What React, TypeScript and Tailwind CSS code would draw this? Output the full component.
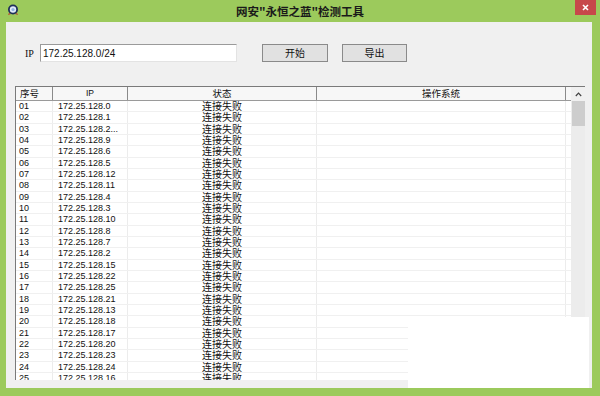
import React from 'react';

const rows: [string, string][] = [
  ['01', '172.25.128.0'],
  ['02', '172.25.128.1'],
  ['03', '172.25.128.2...'],
  ['04', '172.25.128.9'],
  ['05', '172.25.128.6'],
  ['06', '172.25.128.5'],
  ['07', '172.25.128.12'],
  ['08', '172.25.128.11'],
  ['09', '172.25.128.4'],
  ['10', '172.25.128.3'],
  ['11', '172.25.128.10'],
  ['12', '172.25.128.8'],
  ['13', '172.25.128.7'],
  ['14', '172.25.128.2'],
  ['15', '172.25.128.15'],
  ['16', '172.25.128.22'],
  ['17', '172.25.128.25'],
  ['18', '172.25.128.21'],
  ['19', '172.25.128.13'],
  ['20', '172.25.128.18'],
  ['21', '172.25.128.17'],
  ['22', '172.25.128.20'],
  ['23', '172.25.128.23'],
  ['24', '172.25.128.24'],
  ['25', '172.25.128.16'],
];

function AppIcon() {
  return (
    <svg width="12" height="12" viewBox="0 0 12 12">
      <path d="M2 9 L1 11 L4 10 Z" fill="#c0392b" />
      <path d="M10 9 L11 11 L8 10 Z" fill="#c0392b" />
      <circle cx="6" cy="5.5" r="5" fill="#1f2f5a" />
      <circle cx="6" cy="5.5" r="3.2" fill="#dfe9f7" />
      <circle cx="6" cy="5.5" r="1.6" fill="#8fb3e0" />
    </svg>
  );
}

export default function App() {
  return (
    <div className="relative w-[600px] h-[396px] bg-[#9cca5c] flex flex-col overflow-hidden font-['Liberation_Sans','Noto_Sans_CJK_SC',sans-serif] text-[#111]">
      {/* Title bar */}
      <div className="h-[22px] flex items-start">
        <div className="w-[40px] pl-[7px] pt-[4px]">
          <AppIcon />
        </div>
        <div className="flex-1 text-center pt-[4px] text-[11.5px] leading-[14px] font-bold text-[#1a1a1a] font-['Noto_Sans_CJK_SC',sans-serif]">
          网安"永恒之蓝"检测工具
        </div>
        <div className="w-[40px] flex justify-end pr-[4px]">
          <div className="w-[21px] h-[15px] bg-[#c7484a] flex items-center justify-center">
            <svg width="7" height="7" viewBox="0 0 7 7">
              <path d="M1 1 L6 6 M6 1 L1 6" stroke="#fff" strokeWidth="1.6" />
            </svg>
          </div>
        </div>
      </div>

      {/* Client area */}
      <div className="ml-[6px] mr-[8px] h-[366px] bg-[#f0f0f0] flex flex-col">
        {/* IP row */}
        <div className="mt-[22px] h-[18px] flex items-center">
          <div className="w-[34px] pl-[19px] text-[10px] font-['Liberation_Serif',serif]">IP</div>
          <div className="w-[197px] h-[18px] bg-white border border-[#9a9a9a] border-b-[#e3e3e3] border-r-[#e3e3e3] flex items-center pl-[2px] text-[10px]">
            172.25.128.0/24
          </div>
          <button className="ml-[25px] w-[66px] h-[18px] bg-[#e1e1e1] border border-[#8a8a8a] text-[10px] font-['Noto_Sans_CJK_SC',sans-serif] leading-none">
            开始
          </button>
          <button className="ml-[14px] w-[65px] h-[18px] bg-[#e1e1e1] border border-[#8a8a8a] text-[10px] font-['Noto_Sans_CJK_SC',sans-serif] leading-none">
            导出
          </button>
        </div>

        {/* List */}
        <div className="mt-[24px] ml-[9px] w-[570px] h-[294px] flex border-t border-l border-[#7a7a7a] bg-white">
          <div className="flex-1 flex flex-col overflow-hidden">
            <div className="h-[14px] shrink-0 flex items-center bg-[#f7f7f7] border-b border-[#9a9a9a] text-[9.5px] leading-[12px] font-['Noto_Sans_CJK_SC',sans-serif]">
              <div className="w-[37px] h-full pl-[4px] border-r border-[#8a8a8a]">序号</div>
              <div className="w-[75px] h-full text-center border-r border-[#8a8a8a] font-['Liberation_Sans',sans-serif] text-[8.5px]">IP</div>
              <div className="w-[189px] h-full text-center border-r border-[#8a8a8a]">状态</div>
              <div className="w-[249px] h-full text-center border-r border-[#8a8a8a]">操作系统</div>
              <div className="flex-1" />
            </div>
            <div className="flex-1 overflow-hidden">
              {rows.map(([no, ip]) => (
                <div key={no} className="h-[11.33px] flex border-b border-[#f0f0f0] text-[9px] leading-[10px]">
                  <div className="w-[37px] pl-[3px] border-r border-[#ececec]">{no}</div>
                  <div className="w-[75px] pl-[5px] border-r border-[#ececec] whitespace-nowrap overflow-hidden">{ip}</div>
                  <div className="w-[189px] text-center border-r border-[#ececec] text-[10px] leading-[10px] font-['Noto_Sans_CJK_SC',sans-serif]">
                    连接失败
                  </div>
                  <div className="w-[249px] border-r border-[#ececec]" />
                  <div className="flex-1" />
                </div>
              ))}
            </div>
          </div>
          {/* Scrollbar */}
          <div className="w-[14px] bg-[#ececec] flex flex-col">
            <div className="h-[14px] flex items-center justify-center bg-[#f0f0f0]">
              <svg width="7" height="5" viewBox="0 0 7 5">
                <path d="M0.8 4 L3.5 1.2 L6.2 4" stroke="#404040" strokeWidth="1.2" fill="none" />
              </svg>
            </div>
            <div className="ml-[1px] h-[25px] bg-[#cdcdcd]" />
          </div>
        </div>
      </div>

      {/* white patch over the lower right corner */}
      <div className="absolute left-[408px] top-[317px] w-[181px] h-[71px] bg-white" />
    </div>
  );
}
